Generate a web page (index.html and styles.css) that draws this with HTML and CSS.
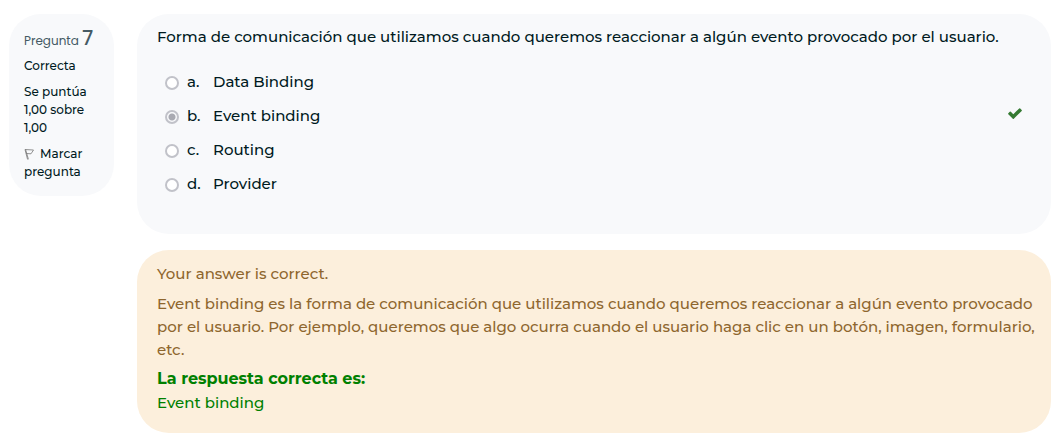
FILE: index.html
```html
<!DOCTYPE html>
<html lang="es">
<head>
<meta charset="utf-8">
<meta name="viewport" content="width=device-width, initial-scale=1">
<title>Pregunta 7</title>
<link rel="stylesheet" href="styles.css">
</head>
<body>
<main class="question">
  <aside class="info">
    <h3 class="number">Pregunta <span class="number-value">7</span></h3>
    <p class="info-line">Correcta</p>
    <p class="info-line">Se puntúa 1,00 sobre 1,00</p>
    <a class="info-line flag" href="#"><svg class="flag-icon" viewBox="0 0 12 12" aria-hidden="true"><path d="M1 1.5L9.5 2L7 5.8L2.2 5.5M1 1.5L3.6 11.5M1.6 1.5L4.4 11.3"/></svg>Marcar pregunta</a>
  </aside>
  <div class="content">
    <section class="formulation">
      <p class="text">Forma de comunicación que utilizamos cuando queremos reaccionar a algún evento provocado por el usuario.</p>
      <div class="answers">
        <div class="answer"><input type="radio" id="a" name="answer" disabled><label for="a"><span class="letter">a.</span>Data Binding</label></div>
        <div class="answer"><input type="radio" id="b" name="answer" disabled checked><label for="b"><span class="letter">b.</span>Event binding</label><svg class="check" viewBox="0 0 14 11" role="img" aria-label="Correcta"><path d="M.3 5.2L1.8 3.7Q2.3 3.2 2.8 3.7L5.3 6.2L11.2.4Q11.7 0 12.2.4L13.7 1.9Q14.1 2.4 13.7 2.9L5.8 10.7Q5.3 11.1 4.8 10.7L.3 6.2Q-.1 5.7.3 5.2Z"/></svg></div>
        <div class="answer"><input type="radio" id="c" name="answer" disabled><label for="c"><span class="letter">c.</span>Routing</label></div>
        <div class="answer"><input type="radio" id="d" name="answer" disabled><label for="d"><span class="letter">d.</span>Provider</label></div>
      </div>
    </section>
    <section class="feedback">
      <p class="result">Your answer is correct.</p>
      <p class="explanation">Event binding es la forma de comunicación que utilizamos cuando queremos reaccionar a algún evento provocado por el usuario. Por ejemplo, queremos que algo ocurra cuando el usuario haga clic en un botón, imagen, formulario, etc.</p>
      <div class="right"><strong>La respuesta correcta es:</strong><p>Event binding</p></div>
    </section>
  </div>
</main>
</body>
</html>
```
FILE: styles.css
```css
* { box-sizing: border-box; }
body {
  margin: 0;
  background: #fff;
  color: #001a1e;
  font: 500 15px/23px Montserrat, Inter, "Open Sans", sans-serif;
}
p, h3 { margin: 0; }
.question {
  display: flex;
  align-items: flex-start;
  gap: 23px;
  padding: 14px 13px 8px 9px;
}
.info {
  flex: 0 0 105px;
  padding: 12px 15px 15px;
  border-radius: 32px;
  background: #f8f9fb;
  font-size: 12px;
  line-height: 18px;
}
.number {
  margin-bottom: 4px;
  font: 400 12px/24px Poppins, Montserrat, sans-serif;
  color: #455a64;
}
.number-value {
  font-size: 20px;
  font-weight: 500;
}
.info-line { margin-bottom: 8px; }
.flag { color: inherit; text-decoration: none; }
.flag-icon {
  width: 12px;
  height: 12px;
  margin-right: 4px;
  vertical-align: -2px;
  fill: none;
  stroke: #777;
  stroke-width: 0.8;
}
.content { flex: 1; min-width: 0; }
.formulation, .feedback {
  padding: 11px 20px 20px;
  border-radius: 32px;
}
.formulation {
  padding-bottom: 34px;
  margin-bottom: 16px;
  background: #f8f9fb;
}
.answers { padding: 16px 8px 0; }
.answer {
  display: flex;
  align-items: center;
  height: 34px;
}
.answer input {
  appearance: none;
  width: 14px;
  height: 14px;
  margin: 3px 8px 0 0;
  border: 2px solid #c1c2c9;
  border-radius: 50%;
  background: #fff;
}
.answer input:checked {
  background: radial-gradient(circle, #a9aab2 3px, #f8f9fb 4px);
}
.letter { display: inline-block; width: 26px; }
.check {
  width: 14px;
  height: 11px;
  margin: 0 1px 4px auto;
  fill: #357a32;
}
.feedback {
  padding: 12px 10px 19px 20px;
  background: #fcefdc;
  color: #8e662e;
}
.result { margin-bottom: 7px; }
.explanation { margin-bottom: 6px; }
.right { color: green; }
.right strong {
  display: block;
  font-size: 16px;
  font-weight: 700;
  line-height: 24px;
}
```
